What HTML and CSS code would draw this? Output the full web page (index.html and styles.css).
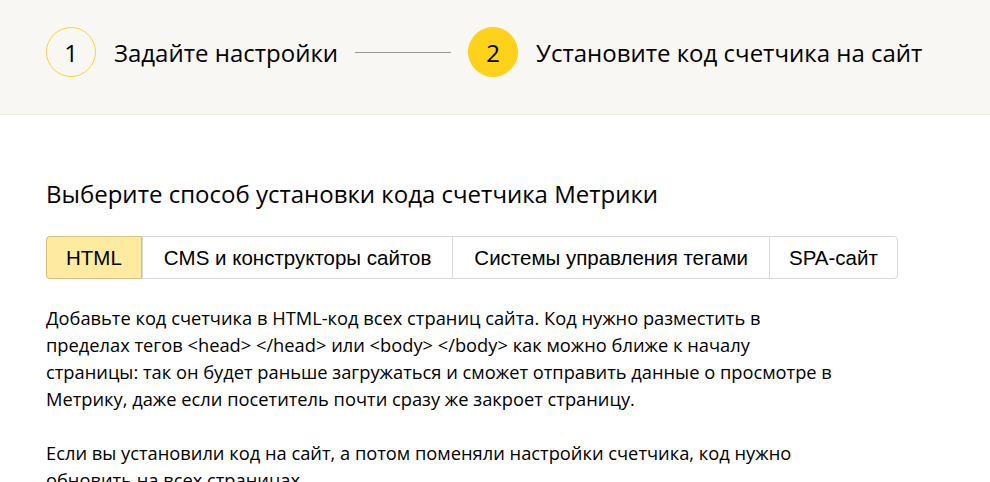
FILE: index.html
```html
<!DOCTYPE html>
<html>
<head>
    <link rel="stylesheet" href="styles.css">
</head>
<body>
    <div class="steps">
        <div class="step">
            <span class="step-num">1</span>
            <span class="step-title">Задайте настройки</span>
        </div>
        <div class="step-line"></div>
        <div class="step">
            <span class="step-num active">2</span>
            <span class="step-title">Установите код счетчика на сайт</span>
        </div>
    </div>

    <div class="content">
        <h2>Выберите способ установки кода счетчика Метрики</h2>

        <div class="tabs">
            <div class="tab selected">HTML</div>
            <div class="tab">CMS и конструкторы сайтов</div>
            <div class="tab">Системы управления тегами</div>
            <div class="tab">SPA-сайт</div>
        </div>

        <p>
            Добавьте код счетчика в HTML-код всех страниц сайта. Код нужно разместить в<br>
            пределах тегов &lt;head&gt; &lt;/head&gt; или &lt;body&gt; &lt;/body&gt; как можно ближе к началу<br>
            страницы: так он будет раньше загружаться и сможет отправить данные о просмотре в<br>
            Метрику, даже если посетитель почти сразу же закроет страницу.
        </p>
        <p>
            Если вы установили код на сайт, а потом поменяли настройки счетчика, код нужно<br>
            обновить на всех страницах.
        </p>
    </div>
</body>
</html>
```

FILE: styles.css
```css
body {
    margin: 0;
    font-family: "Open Sans", sans-serif;
    color: #000;
    background: #fff;
}

.steps {
    display: flex;
    align-items: center;
    padding: 27px 46px 37px;
    background: #f8f7f4;
    border-bottom: 1px solid #ebeae6;
}
.step {
    display: flex;
    align-items: center;
    gap: 18px;
}
.step-num {
    display: flex;
    align-items: center;
    justify-content: center;
    width: 48px;
    height: 48px;
    border: 1px solid #ffd233;
    border-radius: 50%;
    font-size: 24px;
}
.step-num.active {
    background: #fed11a;
    border-color: #fed11a;
}
.step-title {
    font-size: 24px;
}
.step-line {
    width: 96px;
    height: 1px;
    margin: 0 17px;
    background: #999;
}

.content {
    padding: 64px 46px 0;
}
.content h2 {
    margin: 0 0 27px;
    font-size: 24px;
    line-height: 30px;
    font-weight: normal;
}

.tabs {
    display: inline-flex;
    border: 1px solid #d9d9d9;
    border-radius: 4px;
    margin-bottom: 25px;
}
.tab {
    display: flex;
    align-items: center;
    height: 41px;
    padding: 0 21px;
    font-family: "Liberation Sans", Arial, sans-serif;
    font-size: 20.5px;
    border-left: 1px solid #d9d9d9;
}
.tab:first-child {
    border-left: none;
}
.tab:last-child {
    padding: 0 19px;
}
.tab.selected {
    margin: -1px 0 -1px -1px;
    padding: 0 19px;
    background: #ffeba0;
    border: 1px solid #d8c27a;
    border-radius: 4px 0 0 4px;
}

.content p {
    margin: 0 0 27px;
    font-size: 18.3px;
    line-height: 27px;
}
```
